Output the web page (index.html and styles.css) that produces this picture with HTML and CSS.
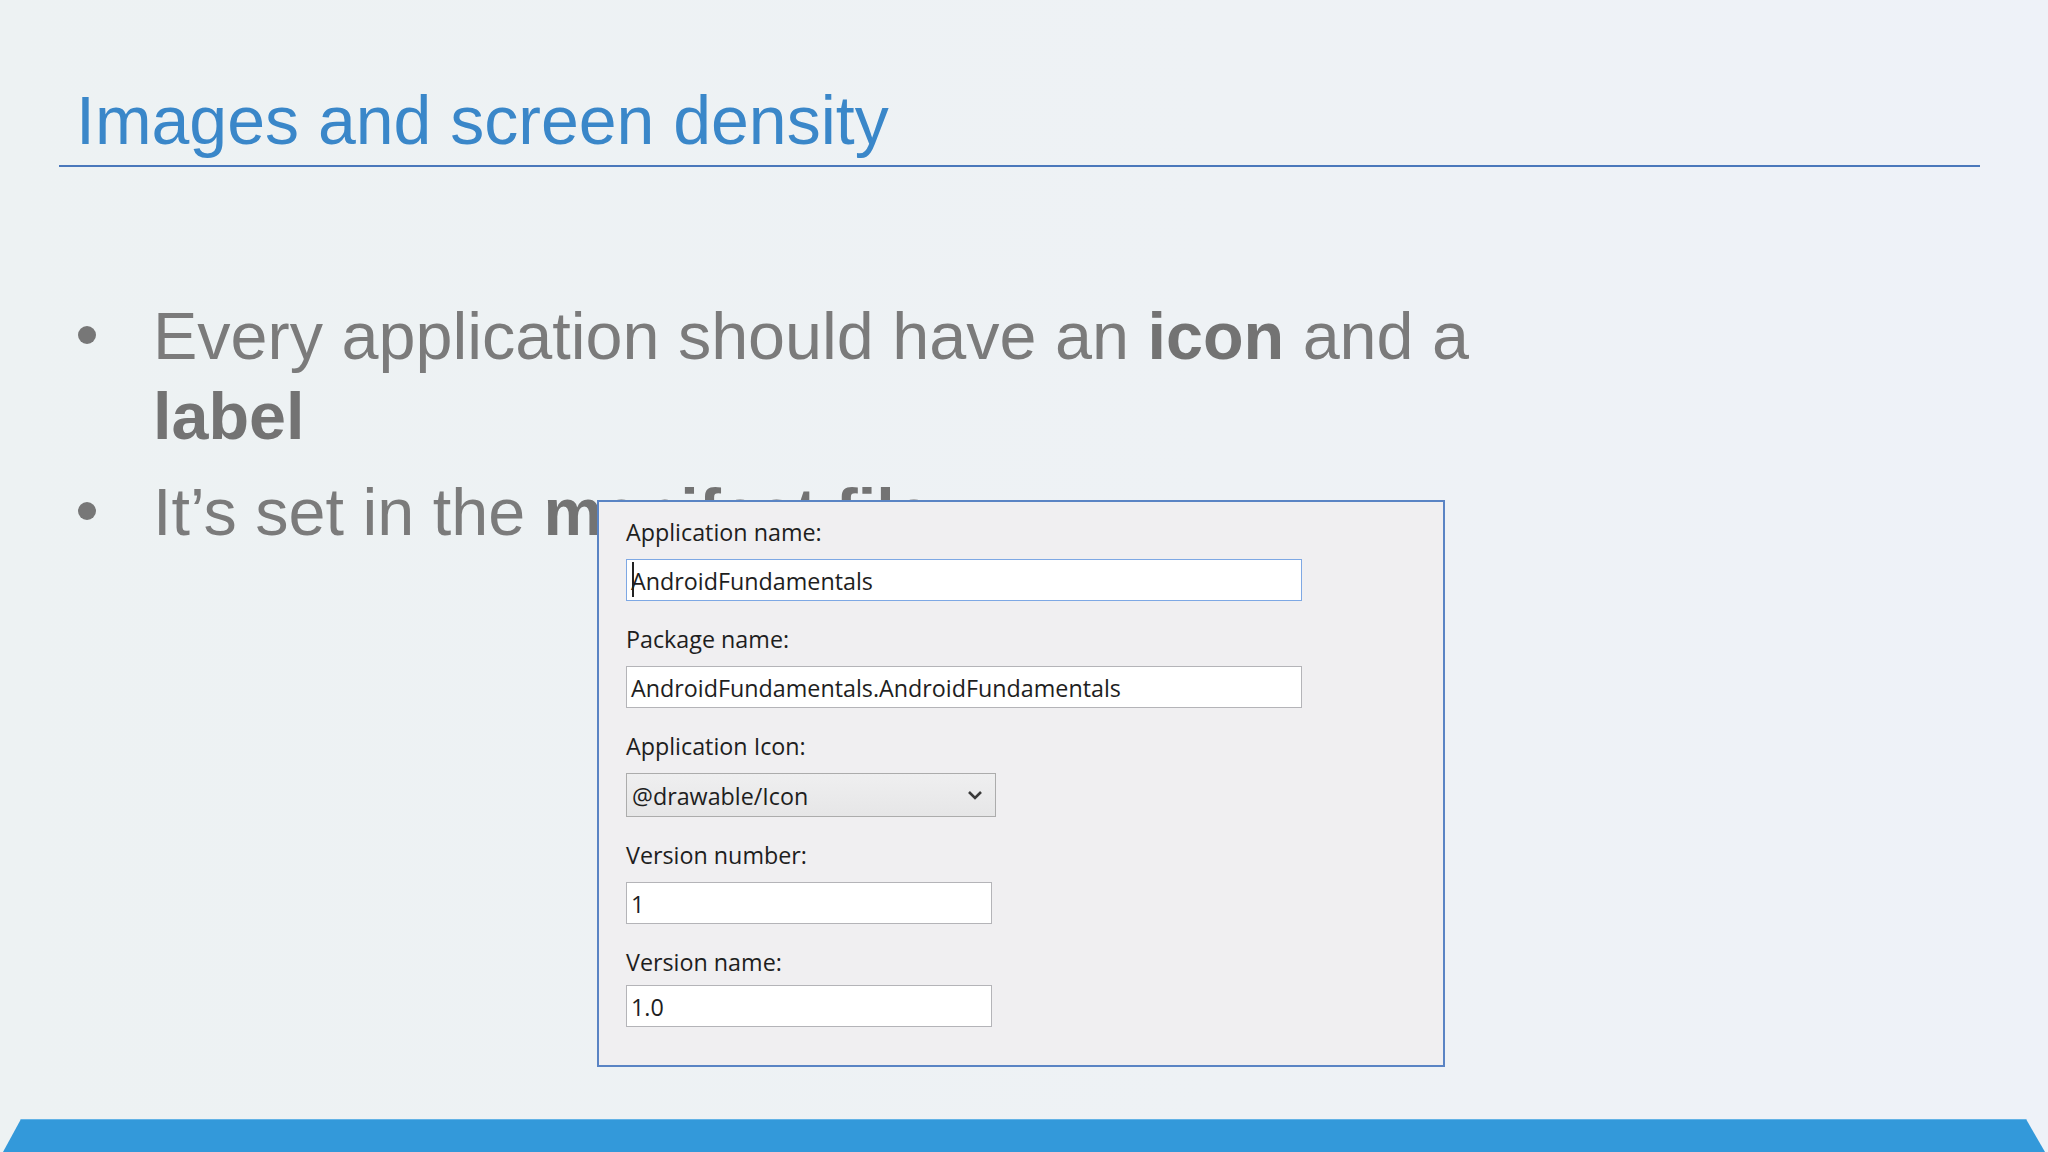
FILE: index.html
```html
<!DOCTYPE html>
<html lang="en">
<head>
<meta charset="utf-8">
<title>Images and screen density</title>
<link rel="stylesheet" href="styles.css">
</head>
<body>
<div class="slide">
  <header class="title-bar">
    <h1 class="title">Images and screen density</h1>
  </header>
  <ul class="bullets">
    <li class="bullet"><span class="dot"></span><span class="btext">Every application should have an <b>icon</b> and a <b>label</b></span></li>
    <li class="bullet"><span class="dot"></span><span class="btext">It’s set in the <b>manifest file</b></span></li>
  </ul>
  <div class="dialog">
    <div class="field">
      <div class="label">Application name:</div>
      <div class="textbox wide focused"><span class="caret"></span>AndroidFundamentals</div>
    </div>
    <div class="field">
      <div class="label">Package name:</div>
      <div class="textbox wide">AndroidFundamentals.AndroidFundamentals</div>
    </div>
    <div class="field">
      <div class="label">Application Icon:</div>
      <div class="select"><span>@drawable/Icon</span>
        <svg class="chev" width="16" height="12" viewBox="0 0 16 12"><path d="M2 3 L8 9 L14 3" fill="none" stroke="#3a3a3a" stroke-width="2.6"/></svg>
      </div>
    </div>
    <div class="field">
      <div class="label">Version number:</div>
      <div class="textbox narrow">1</div>
    </div>
    <div class="field last">
      <div class="label">Version name:</div>
      <div class="textbox narrow">1.0</div>
    </div>
  </div>
  <div class="bottom-bar"></div>
</div>
</body>
</html>
```
FILE: styles.css
```css
html, body {
  margin: 0;
  padding: 0;
}
body {
  width: 2048px;
  height: 1152px;
  overflow: hidden;
  background: #edf1f4;
}
.slide {
  position: relative;
  width: 2048px;
  height: 1152px;
  display: flex;
  flex-direction: column;
  background: linear-gradient(90deg, #edf2f3 0%, #eef2f5 60%, #eef2f8 100%);
  font-family: "Liberation Sans", Arial, sans-serif;
}
.title-bar {
  margin: 80px 0 0 59px;
  width: 1921px;
  border-bottom: 2px solid #4a78bb;
  padding: 0 0 5px 17px;
  box-sizing: border-box;
}
.title {
  margin: 0;
  font-weight: normal;
  font-size: 68px;
  line-height: 80px;
  color: #3a87c9;
}
.bullets {
  list-style: none;
  margin: 129px 0 0 0;
  padding: 0;
  color: #7b7b7b;
  font-size: 66.5px;
  line-height: 80px;
}
.bullet {
  display: flex;
  align-items: flex-start;
  margin-bottom: 16px;
}
.dot {
  flex: none;
  width: 18px;
  height: 18px;
  border-radius: 50%;
  background: #777;
  margin: 30px 0 0 78px;
}
.btext {
  margin-left: 57px;
  width: 1380px;
}
.btext b {
  color: #737373;
}
.dialog {
  position: absolute;
  left: 597px;
  top: 500px;
  width: 848px;
  height: 567px;
  box-sizing: border-box;
  border: 2px solid #5a84c4;
  background: #f0eff1;
  padding: 15px 0 0 27px;
  font-family: "Open Sans", "Noto Sans", sans-serif;
  font-size: 23.3px;
  color: #1e1e1e;
}
.field {
  margin-bottom: 23px;
}
.field.last .label {
  margin-bottom: 8px;
}
.label {
  line-height: 30px;
  height: 30px;
  margin-bottom: 12px;
}
.textbox {
  position: relative;
  height: 42px;
  box-sizing: border-box;
  border: 1px solid #b4b4b8;
  background: #ffffff;
  padding: 6px 3px 0 4px;
  line-height: 30px;
  white-space: nowrap;
}
.textbox.wide {
  width: 676px;
}
.textbox.narrow {
  width: 366px;
}
.textbox.focused {
  border-color: #7ea8e4;
}
.caret {
  position: absolute;
  left: 5px;
  top: 2px;
  width: 2px;
  height: 35px;
  background: #222;
}
.select {
  width: 370px;
  height: 44px;
  box-sizing: border-box;
  border: 1px solid #acacac;
  background: linear-gradient(180deg, #efeff0 0%, #e6e6e7 100%);
  padding: 7px 12px 0 5px;
  line-height: 30px;
  display: flex;
  justify-content: space-between;
  align-items: flex-start;
}
.chev {
  margin-top: 8px;
}
.bottom-bar {
  margin-top: auto;
  height: 33px;
  background: #3399da;
  border-top: 1px solid #63b3e6;
  box-sizing: border-box;
  clip-path: polygon(21px 0, 2026px 0, 2045px 100%, 3px 100%);
}
```
